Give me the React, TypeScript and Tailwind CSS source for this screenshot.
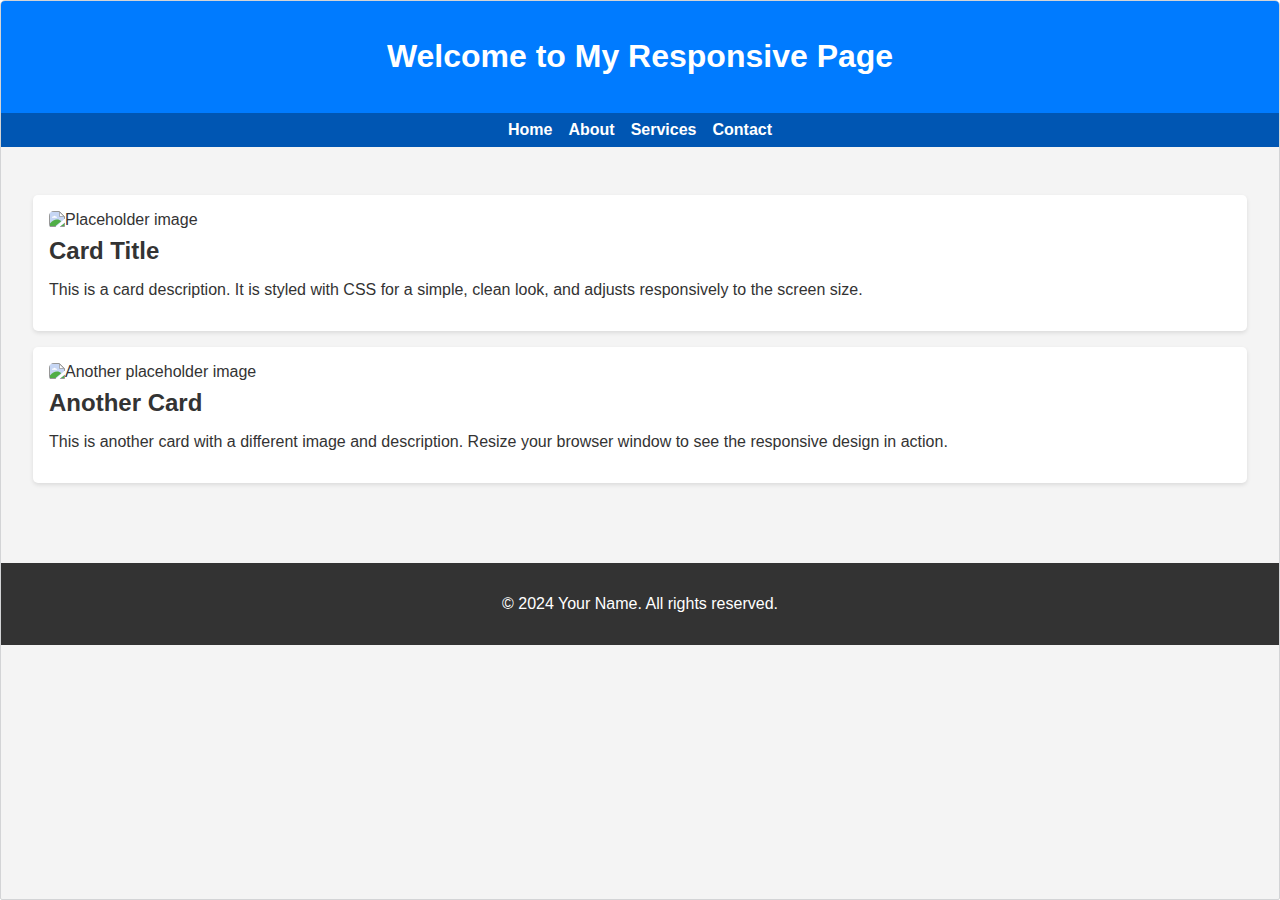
import React from "react";

interface CardProps {
  /** Text shown in place of the missing image */
  imageAlt: string;
  title: string;
  description: string;
}

const NAV_LINKS = [
  { label: "Home", href: "#home" },
  { label: "About", href: "#about" },
  { label: "Services", href: "#services" },
  { label: "Contact", href: "#contact" },
];

const CARDS: CardProps[] = [
  {
    imageAlt: "Placeholder image",
    title: "Card Title",
    description:
      "This is a card description. It is styled with CSS for a simple, clean look, and adjusts responsively to the screen size.",
  },
  {
    imageAlt: "Another placeholder image",
    title: "Another Card",
    description:
      "This is another card with a different image and description. Resize your browser window to see the responsive design in action.",
  },
];

/** Torn picture icon for an image that could not be loaded */
const BrokenImageIcon: React.FC = () => (
  <svg
    className="h-4 w-4 shrink-0"
    viewBox="0 0 16 16"
    fill="none"
    aria-hidden="true"
  >
    <path d="M.5.5h10l5 5v10H.5z" fill="#c6d6f4" />
    <path
      d="M3 6.8c0-1 .8-1.4 1.5-1.3.3-.9 1.7-1 2.1-.1.9-.1 1.4.5 1.4 1.4z"
      fill="#fff"
    />
    <path d="M1 15v-2.5C3 10.2 5.6 8.6 8 8.6c1.8 0 3.2.7 4.2 1.7L6.5 15z" fill="#50ae46" />
    <path d="M15 12.5V15h-3.5z" fill="#50ae46" />
    <path d="M7 15.5H.5V.5h10l5 5v2.5M15.5 12v3.5H11" stroke="#979797" />
    <path d="M10.5 1v4.5H15z" fill="#fff" stroke="#979797" strokeWidth=".75" />
    <path d="M6.5 16 16 7.5v3.5L10.5 16z" fill="#fff" />
  </svg>
);

const Card: React.FC<CardProps> = ({ imageAlt, title, description }) => (
  <article className="rounded-[5px] bg-white p-4 shadow-[0_2px_4px_rgba(0,0,0,0.1)]">
    <div className="flex items-start overflow-hidden rounded-[5px]">
      <BrokenImageIcon />
      <span className="leading-[18px]">{imageAlt}</span>
    </div>
    <h2 className="mt-2 text-2xl leading-7 font-bold">{title}</h2>
    <p className="my-4 leading-[18px]">{description}</p>
  </article>
);

export default function App() {
  return (
    <div className="min-h-screen overflow-hidden rounded-t-[5px] rounded-b-[2px] border border-[#d3d4d6] bg-[#f4f4f4] font-['Liberation_Sans',Arial,sans-serif] text-base text-[#333]">
      <header className="bg-[#007bff] px-4 pt-9 pb-[38px] text-center text-white">
        <h1 className="text-[32px] leading-[38px] font-bold">
          Welcome to My Responsive Page
        </h1>
      </header>

      <nav className="flex flex-wrap justify-center gap-4 bg-[#0056b3] p-2">
        {NAV_LINKS.map((link) => (
          <a
            key={link.label}
            href={link.href}
            className="leading-[18px] font-bold text-white"
          >
            {link.label}
          </a>
        ))}
      </nav>

      <main className="flex flex-col gap-4 px-8 pt-12 pb-20">
        {CARDS.map((card) => (
          <Card key={card.title} {...card} />
        ))}
      </main>

      <footer className="bg-[#333] px-4 py-8 text-center text-white">
        <p className="leading-[18px]">
          © 2024 Your Name. All rights reserved.
        </p>
      </footer>
    </div>
  );
}
